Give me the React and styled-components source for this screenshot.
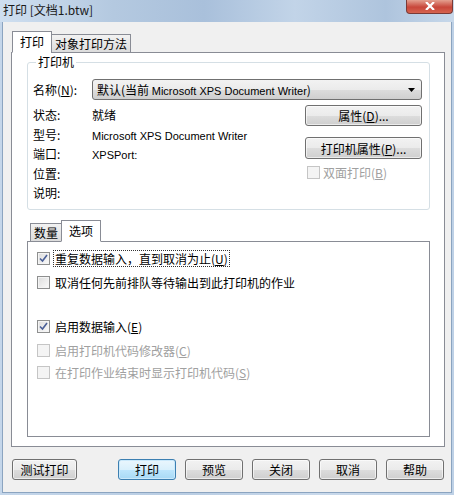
import React from 'react'
import styled, { createGlobalStyle } from 'styled-components'

const Global = createGlobalStyle`
  html, body { margin: 0; padding: 0; background: #f0f0f0; }
  body { font-family: "Noto Sans CJK SC", "Noto Sans", sans-serif; font-size: 12px; color: #000; }
`

const Window = styled.div`
  width: 454px;
  height: 495px;
  display: flex;
  flex-direction: column;
  background: linear-gradient(90deg, #c4d6ea 0%, #b9cde3 40%, #c9d9eb 70%, #bed1e6 100%);
  box-sizing: border-box;
  overflow: hidden;
`

const TitleBar = styled.div`
  height: 22px;
  flex: none;
  display: flex;
  align-items: flex-start;
  justify-content: space-between;
  background: linear-gradient(90deg, #cfdff0 0%, #b4c9e0 25%, #a9c0db 45%, #c2d4e8 65%, #aec4dd 85%, #c7d8ea 100%);
`

const Title = styled.div`
  padding: 2px 0 0 3px;
  font-size: 12px;
  line-height: 16px;
  color: #1a1a1a;
`

const CloseBtn = styled.div`
  width: 45px;
  height: 13px;
  margin-right: 1px;
  border: 1px solid #7a3a36;
  border-top: none;
  border-radius: 0 0 4px 4px;
  background: linear-gradient(#e4a08f, #c8463a 55%, #d6644f);
  display: flex;
  align-items: center;
  justify-content: center;
  svg { display: block; margin-top: -2px; }
`

const Body = styled.div`
  flex: 1;
  margin: 0 2px 2px;
  background: #f0f0f0;
  border: 1px solid #8ba4c0;
  border-top: none;
  display: flex;
  flex-direction: column;
  padding: 9px 6px 0 8px;
`

const TabStrip = styled.div`
  display: flex;
  align-items: flex-end;
  height: 22px;
  flex: none;
  padding-left: ${p => p.$indent || 0}px;
  position: relative;
  z-index: 1;
  margin-bottom: -1px;
`

const Tab = styled.div`
  box-sizing: border-box;
  padding: 0 ${p => (p.$active ? 7 : 3)}px;
  height: ${p => (p.$active ? 22 : 19)}px;
  line-height: ${p => (p.$active ? 20 : 18)}px;
  border: 1px solid #898c95;
  border-bottom: ${p => (p.$active ? '1px solid #fff' : '1px solid #898c95')};
  background: ${p => (p.$active ? '#fff' : 'linear-gradient(#f2f2f2, #dcdcdc)')};
  margin-left: ${p => (p.$first ? 0 : -1)}px;
  font-size: 12px;
  white-space: nowrap;
`

const Panel = styled.div`
  border: 1px solid #898c95;
  background: #fff;
  box-sizing: border-box;
  display: flex;
  flex-direction: column;
  flex: none;
  height: ${p => p.$h}px;
  padding: ${p => p.$pad};
`

const GroupBox = styled.fieldset`
  margin: 0;
  border: 1px solid #d5dfe5;
  border-radius: 3px;
  padding: 0 7px 0 5px;
  height: 155px;
  box-sizing: border-box;
  legend {
    padding: 0 2px;
    margin-left: 3px;
    font-size: 12px;
    line-height: 14px;
  }
`

const NameRow = styled.div`
  display: flex;
  align-items: center;
  margin-top: 10px;
`

const Label = styled.div`
  width: 59px;
  flex: none;
  height: 19.5px;
  line-height: 19.5px;
  white-space: nowrap;
`

const Select = styled.div`
  flex: 1;
  height: 21px;
  box-sizing: border-box;
  border: 1px solid #707070;
  border-radius: 3px;
  background: linear-gradient(#f2f2f2 0%, #ebebeb 50%, #dddddd 51%, #cfcfcf 100%);
  display: flex;
  align-items: center;
  justify-content: space-between;
  padding: 0 6px 0 4px;
  font-size: 12px;
`

const Latin = styled.span`
  font-family: "Liberation Sans", Arial, sans-serif;
  font-size: 11px;
`

const InfoWrap = styled.div`
  display: flex;
  justify-content: space-between;
  margin-top: 5px;
`

const InfoGrid = styled.div`
  display: grid;
  grid-template-columns: 59px auto;
  grid-auto-rows: 19.5px;
  align-items: center;
`

const Value = styled.div`
  white-space: nowrap;
`

const SideCol = styled.div`
  width: 117px;
  display: flex;
  flex-direction: column;
  margin-top: 0;
`

const Button = styled.div`
  box-sizing: border-box;
  flex: none;
  height: ${p => p.$h || 21}px;
  width: ${p => (p.$w ? p.$w + 'px' : 'auto')};
  border: 1px solid ${p => (p.$default ? '#3c7fb1' : '#707070')};
  border-radius: 3px;
  background: ${p =>
    p.$default
      ? 'linear-gradient(#eaf6fd 0%, #d9f0fc 50%, #bee6fd 51%, #a7d9f5 100%)'
      : 'linear-gradient(#f2f2f2 0%, #ebebeb 50%, #dddddd 51%, #cfcfcf 100%)'};
  box-shadow: inset 0 0 0 1px ${p => (p.$default ? '#cbe9fb' : 'rgba(255,255,255,0.6)')};
  display: flex;
  align-items: center;
  justify-content: center;
  font-size: 12px;
  white-space: nowrap;
  margin-top: ${p => p.$mt || 0}px;
`

const CheckRow = styled.div`
  display: flex;
  align-items: center;
  height: 18px;
  margin-top: ${p => p.$mt || 0}px;
  margin-left: ${p => p.$ml || 0}px;
  color: ${p => (p.$disabled ? '#a0a0a0' : '#000')};
`

const Box = styled.div`
  width: 13px;
  height: 13px;
  flex: none;
  box-sizing: border-box;
  border: 1px solid ${p => (p.$disabled ? '#c5c5c5' : '#8e8f8f')};
  background: ${p => (p.$disabled ? '#f4f4f4' : 'linear-gradient(135deg, #dcdcdc, #fbfbfb)')};
  box-shadow: inset 0 0 0 1px #f4f4f4;
  margin-right: 3px;
  display: flex;
  align-items: center;
  justify-content: center;
`

const Caption = styled.span`
  padding: 0 1px;
  line-height: 15px;
  border: 1px dotted ${p => (p.$focus ? '#333' : 'transparent')};
`

const InnerTabsArea = styled.div`
  margin-top: 10px;
  display: flex;
  flex-direction: column;
`

const Footer = styled.div`
  display: flex;
  align-items: center;
  height: 45px;
  padding: 0 0 0 1px;
  gap: 9px;
`

const Spacer = styled.div`
  width: 23px;
  flex: none;
`

const Check = () => (
  <svg width="9" height="9" viewBox="0 0 9 9">
    <path d="M1 4.5 L3.5 7 L8 1" fill="none" stroke="#4a5f97" strokeWidth="1.6" />
  </svg>
)

const CheckItem = ({ checked, disabled, focus, mt, children }) => (
  <CheckRow $mt={mt} $disabled={disabled}>
    <Box $disabled={disabled}>{checked && <Check />}</Box>
    <Caption $focus={focus}>{children}</Caption>
  </CheckRow>
)

export default function App() {
  return (
    <>
      <Global />
      <Window>
        <TitleBar>
          <Title>打印 [文档1.btw]</Title>
          <CloseBtn>
            <svg width="10" height="8" viewBox="0 0 10 8">
              <path d="M1 0 L9 8 M9 0 L1 8" stroke="#fff" strokeWidth="2.2" />
            </svg>
          </CloseBtn>
        </TitleBar>
        <Body>
          <TabStrip $indent={1}>
            <Tab $active $first>打印</Tab>
            <Tab>对象打印方法</Tab>
          </TabStrip>
          <Panel $h={395} $pad="2px 14px 0 15px">
            <GroupBox>
              <legend>打印机</legend>
              <NameRow>
                <Label>名称(<u>N</u>):</Label>
                <Select>
                  <span>
                    默认(当前 <Latin>Microsoft XPS Document Writer</Latin>)
                  </span>
                  <svg width="7" height="4" viewBox="0 0 7 4">
                    <path d="M0 0 H7 L3.5 4 Z" fill="#000" />
                  </svg>
                </Select>
              </NameRow>
              <InfoWrap>
                <InfoGrid>
                  <Label>状态:</Label>
                  <Value>就绪</Value>
                  <Label>型号:</Label>
                  <Value><Latin>Microsoft XPS Document Writer</Latin></Value>
                  <Label>端口:</Label>
                  <Value><Latin>XPSPort:</Latin></Value>
                  <Label>位置:</Label>
                  <Value />
                  <Label>说明:</Label>
                  <Value />
                </InfoGrid>
                <SideCol>
                  <Button $h={21}>属性(<u>D</u>)...</Button>
                  <Button $h={22} $mt={11}>打印机属性(<u>P</u>)...</Button>
                  <CheckRow $disabled $mt={4} $ml={2}>
                    <Box $disabled />
                    <span>双面打印(<u>B</u>)</span>
                  </CheckRow>
                </SideCol>
              </InfoWrap>
            </GroupBox>
            <InnerTabsArea>
              <TabStrip $indent={3}>
                <Tab $first>数量</Tab>
                <Tab $active>选项</Tab>
              </TabStrip>
              <Panel $h={196} $pad="7px 0 0 9px">
                <CheckItem checked focus>重复数据输入，直到取消为止(<u>U</u>)</CheckItem>
                <CheckItem mt={6}>取消任何先前排队等待输出到此打印机的作业</CheckItem>
                <CheckItem checked mt={26}>启用数据输入(<u>E</u>)</CheckItem>
                <CheckItem disabled mt={6}>启用打印机代码修改器(<u>C</u>)</CheckItem>
                <CheckItem disabled mt={4}>在打印作业结束时显示打印机代码(<u>S</u>)</CheckItem>
              </Panel>
            </InnerTabsArea>
          </Panel>
          <Footer>
            <Button $w={65}>测试打印</Button>
            <Spacer />
            <Button $w={58} $default>打印</Button>
            <Button $w={58}>预览</Button>
            <Button $w={58}>关闭</Button>
            <Button $w={58}>取消</Button>
            <Button $w={58}>帮助</Button>
          </Footer>
        </Body>
      </Window>
    </>
  )
}
